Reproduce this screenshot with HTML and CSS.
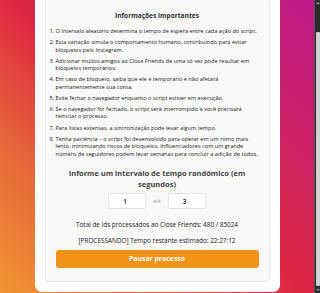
FILE: index.html
```html
<!DOCTYPE html>
<html lang="pt-BR">
<head>
<meta charset="utf-8">
<title>Close Friends</title>
<link rel="stylesheet" href="styles.css">
</head>
<body>
<div class="page">
  <main class="stage">
    <section class="modal">
      <div class="panel">
        <h2 class="title">Informações importantes</h2>
        <ol class="tips">
          <li>O intervalo aleatório determina o tempo de espera entre cada ação do script.</li>
          <li>Esta variação simula o comportamento humano, contribuindo para evitar bloqueios pelo Instagram.</li>
          <li>Adicionar muitos amigos ao Close Friends de uma só vez pode resultar em bloqueios temporários.</li>
          <li>Em caso de bloqueio, saiba que ele é temporário e não afetará permanentemente sua conta.</li>
          <li>Evite fechar o navegador enquanto o script estiver em execução.</li>
          <li>Se o navegador for fechado, o script será interrompido e você precisará reiniciar o processo.</li>
          <li>Para listas extensas, a sincronização pode levar algum tempo.</li>
          <li>Tenha paciência – o script foi desenvolvido para operar em um ritmo mais lento, minimizando riscos de bloqueios. Influenciadores com um grande número de seguidores podem levar semanas para concluir a adição de todos.</li>
        </ol>
        <h3 class="ask">Informe um intervalo de tempo randômico (em segundos)</h3>
        <div class="range">
          <input class="num" type="text" value="1">
          <span class="until">até</span>
          <input class="num" type="text" value="3">
        </div>
        <p class="status">Total de ids processados ao Close Friends: 480 / 85024</p>
        <p class="status second">[PROCESSANDO] Tempo restante estimado: 22:27:12</p>
        <button class="pause" type="button">Pausar processo</button>
      </div>
    </section>
  </main>
  <div class="scrollbar">
    <span class="arrow up"></span>
    <span class="thumb"></span>
    <span class="arrow down"></span>
  </div>
</div>
</body>
</html>
```

FILE: styles.css
```css
* { box-sizing: border-box; }
html, body { margin: 0; padding: 0; height: 100%; overflow: hidden; }
body {
  font-family: "Open Sans", "Noto Sans", "Liberation Sans", sans-serif;
  color: #222;
}
.page {
  display: flex;
  height: 293px;
}
.stage {
  flex: 1;
  min-width: 0;
  background: linear-gradient(45deg, #f09433 0%, #e6683c 25%, #dc2743 50%, #cc2366 75%, #bc1888 100%);
  display: flex;
  justify-content: center;
  align-items: flex-start;
  overflow: hidden;
}
.modal {
  width: 245px;
  margin-top: -12px;
  background: #fff;
  border-radius: 0 0 7px 7px;
  padding: 10px 10px 9.7px;
}
.panel {
  background: #f8f8f8;
  border: 1px solid #e7e7e7;
  border-radius: 4px;
  padding: 11.5px 10px 13.3px;
  display: flex;
  flex-direction: column;
}
.title {
  margin: 0;
  font-size: 6.6px;
  line-height: 9px;
  font-weight: 700;
  text-align: center;
  color: #333;
}
.tips {
  margin: 8.45px 0 0;
  padding: 0;
  font-size: 5.6px;
  line-height: 7.5px;
  color: #222;
}
.tips li + li { margin-top: 3.6px; }
.ask {
  margin: 9.8px 0 0;
  font-size: 7.5px;
  line-height: 10.7px;
  font-weight: 700;
  text-align: center;
  color: #444;
}
.range {
  margin-top: 4px;
  display: flex;
  justify-content: center;
  align-items: center;
  gap: 7px;
}
.num {
  width: 38px;
  height: 16px;
  border: 1px solid #e6e6e6;
  border-radius: 2px;
  background: #fff;
  font: inherit;
  font-size: 6.4px;
  font-weight: 600;
  color: #222;
  padding: 0 0 0 14px;
}
.until {
  font-size: 5px;
  color: #999;
}
.status {
  margin: 11.4px 0 0;
  font-size: 6.4px;
  line-height: 8px;
  text-align: center;
  color: #222;
}
.status.second { margin-top: 8.3px; }
.pause {
  margin: 5.3px 0 0;
  height: 17.4px;
  border: 0;
  border-radius: 3px;
  background: #f39219;
  color: #fff;
  font: inherit;
  font-size: 6.9px;
  font-weight: 700;
}
.scrollbar {
  width: 6px;
  background: #2b2b2b;
  border-left: 1px solid #555;
  display: flex;
  flex-direction: column;
  align-items: center;
}
.arrow {
  width: 0; height: 0;
  border-left: 2px solid transparent;
  border-right: 2px solid transparent;
}
.arrow.up { border-bottom: 2px solid #a0a0a0; margin-top: 2px; }
.arrow.down { border-top: 2px solid #a0a0a0; margin-bottom: 2px; }
.thumb {
  width: 4px;
  margin: 28px 0 3px;
  flex: 1;
  background: #d2d2d2;
  border-radius: 1px;
}
```
